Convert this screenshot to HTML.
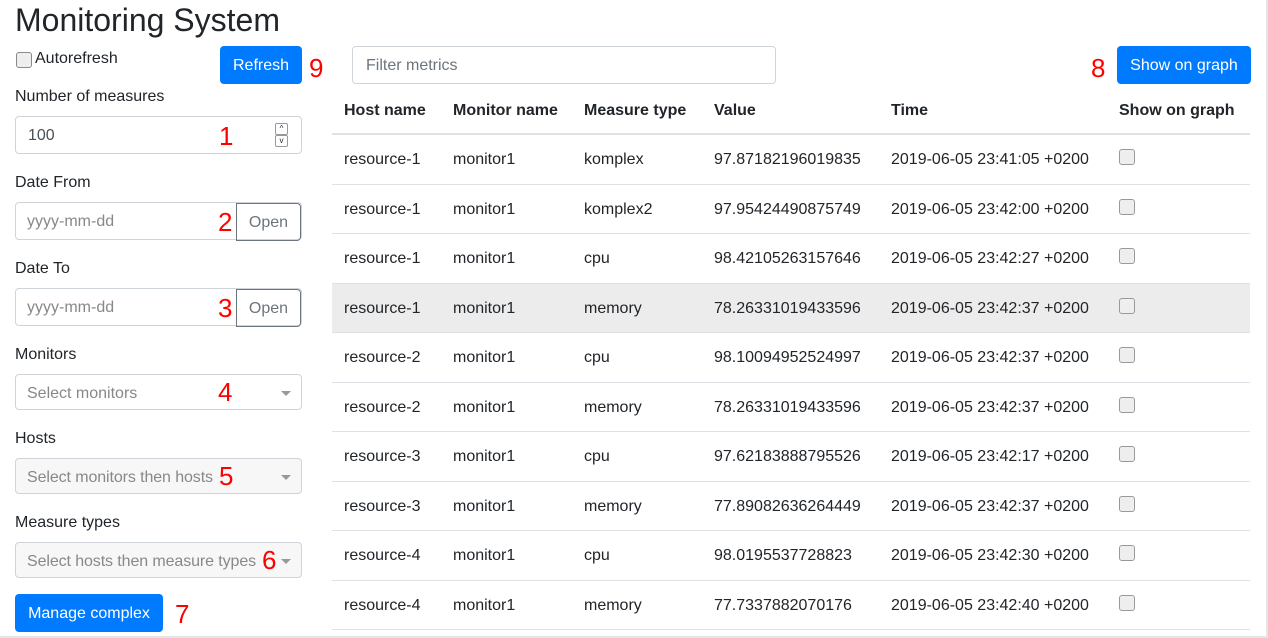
<!DOCTYPE html>
<html><head><style>
body{margin:0;width:1268px;height:638px;overflow:hidden;font-family:"Liberation Sans",sans-serif;color:#212529;font-size:16px;background:#fff;position:relative}
.a{position:absolute}
h1{position:absolute;left:15px;top:1px;margin:0;font-weight:400;font-size:32px;line-height:38px}
.lbl{position:absolute;left:15px;font-size:16px;line-height:20px}
.inp{position:absolute;left:15px;height:36px;border:1px solid #ced4da;border-radius:4px;box-sizing:border-box;width:287px}
.ph{position:absolute;left:11px;top:9px;color:#888;font-size:16px;line-height:20px}
.btn{position:absolute;background:#007bff;color:#fff;border-radius:4px;text-align:center;line-height:40px;height:38px;font-size:16px}
.red{position:absolute;color:#f00;font-size:26px;line-height:30px}
.caret{position:absolute;right:10px;top:16px;border-left:5px solid transparent;border-right:5px solid transparent;border-top:5px solid #999;width:0;height:0}
.open{position:absolute;right:0;top:0;width:65px;height:36px;border:1px solid #6c757d;border-radius:0 4px 4px 0;box-sizing:border-box;color:#6c757d;text-align:center;line-height:34px}
table{position:absolute;left:332px;top:87px;width:918px;border-collapse:collapse}
th{text-align:left;font-weight:700;height:44px;border-bottom:2px solid #dee2e6;padding:2px 0 0 12px}
td{height:46.5px;border-bottom:1px solid #dee2e6;padding:2px 0 0 12px}
.cb{display:inline-block;width:14px;height:14px;border:1px solid #999;border-radius:3px;background:#eee;vertical-align:-1px;margin-top:-8px}
tr.hl td{background:#ececec}
</style></head><body>
<h1>Monitoring System</h1>
<div class="a" style="left:16px;top:52px;width:14px;height:14px;border:1px solid #888;border-radius:3px;background:#eee"></div>
<div class="a" style="left:35px;top:49px;line-height:20px">Autorefresh</div>
<div class="btn" style="left:220px;top:46px;width:82px">Refresh</div>
<div class="red" style="left:309px;top:53px">9</div>

<div class="lbl" style="top:87px">Number of measures</div>
<div class="inp" style="top:116px;height:38px"><div class="ph" style="color:#495057;top:9px;left:12px">100</div>
<div class="a" style="left:259px;top:6px;width:11px;height:10px;border:1px solid #999;border-radius:2px;font-size:8px;line-height:10px;text-align:center">^</div>
<div class="a" style="left:259px;top:18px;width:11px;height:10px;border:1px solid #999;border-radius:2px;font-size:8px;line-height:10px;text-align:center">v</div></div>
<div class="red" style="left:219px;top:121px">1</div>

<div class="lbl" style="top:173px">Date From</div>
<div class="inp" style="top:202px;height:38px"><div class="ph" style="top:9px">yyyy-mm-dd</div><div class="open" style="height:38px;line-height:38px">Open</div></div>
<div class="red" style="left:218px;top:207px">2</div>

<div class="lbl" style="top:259px">Date To</div>
<div class="inp" style="top:288px;height:38px"><div class="ph" style="top:9px">yyyy-mm-dd</div><div class="open" style="height:38px;line-height:38px">Open</div></div>
<div class="red" style="left:218px;top:293px">3</div>

<div class="lbl" style="top:345px">Monitors</div>
<div class="inp" style="top:374px"><div class="ph">Select monitors</div><div class="caret"></div></div>
<div class="red" style="left:218px;top:377px">4</div>

<div class="lbl" style="top:429px">Hosts</div>
<div class="inp" style="top:458px;background:#f7f7f7"><div class="ph" style="letter-spacing:-0.1px">Select monitors then hosts</div><div class="caret"></div></div>
<div class="red" style="left:219px;top:461px">5</div>

<div class="lbl" style="top:513px">Measure types</div>
<div class="inp" style="top:542px;background:#f7f7f7"><div class="ph" style="letter-spacing:-0.1px">Select hosts then measure types</div><div class="caret"></div></div>
<div class="red" style="left:262px;top:545px">6</div>

<div class="btn" style="left:15px;top:594px;width:148px">Manage complex</div>
<div class="red" style="left:175px;top:599px">7</div>

<div class="a" style="left:352px;top:46px;width:424px;height:38px;border:1px solid #ced4da;border-radius:4px;box-sizing:border-box"><div class="ph" style="top:9px;left:13px;color:#6c757d">Filter metrics</div></div>
<div class="red" style="left:1091px;top:53px">8</div>
<div class="btn" style="left:1117px;top:46px;width:134px">Show on graph</div>

<table>
<tr><th style="width:97px">Host name</th><th style="width:119px">Monitor name</th><th style="width:118px">Measure type</th><th style="width:165px">Value</th><th style="width:216px">Time</th><th>Show on graph</th></tr>
<tr><td>resource-1</td><td>monitor1</td><td>komplex</td><td>97.87182196019835</td><td>2019-06-05 23:41:05 +0200</td><td><span class="cb"></span></td></tr>
<tr><td>resource-1</td><td>monitor1</td><td>komplex2</td><td>97.95424490875749</td><td>2019-06-05 23:42:00 +0200</td><td><span class="cb"></span></td></tr>
<tr><td>resource-1</td><td>monitor1</td><td>cpu</td><td>98.42105263157646</td><td>2019-06-05 23:42:27 +0200</td><td><span class="cb"></span></td></tr>
<tr class="hl"><td>resource-1</td><td>monitor1</td><td>memory</td><td>78.26331019433596</td><td>2019-06-05 23:42:37 +0200</td><td><span class="cb"></span></td></tr>
<tr><td>resource-2</td><td>monitor1</td><td>cpu</td><td>98.10094952524997</td><td>2019-06-05 23:42:37 +0200</td><td><span class="cb"></span></td></tr>
<tr><td>resource-2</td><td>monitor1</td><td>memory</td><td>78.26331019433596</td><td>2019-06-05 23:42:37 +0200</td><td><span class="cb"></span></td></tr>
<tr><td>resource-3</td><td>monitor1</td><td>cpu</td><td>97.62183888795526</td><td>2019-06-05 23:42:17 +0200</td><td><span class="cb"></span></td></tr>
<tr><td>resource-3</td><td>monitor1</td><td>memory</td><td>77.89082636264449</td><td>2019-06-05 23:42:37 +0200</td><td><span class="cb"></span></td></tr>
<tr><td>resource-4</td><td>monitor1</td><td>cpu</td><td>98.0195537728823</td><td>2019-06-05 23:42:30 +0200</td><td><span class="cb"></span></td></tr>
<tr><td>resource-4</td><td>monitor1</td><td>memory</td><td>77.7337882070176</td><td>2019-06-05 23:42:40 +0200</td><td><span class="cb"></span></td></tr>
</table>
<div class="a" style="left:0;top:636px;width:1268px;height:2px;background:#e5e5e5"></div>
<div class="a" style="left:1266px;top:0;width:2px;height:638px;background:#e5e5e5"></div>
</body></html>
